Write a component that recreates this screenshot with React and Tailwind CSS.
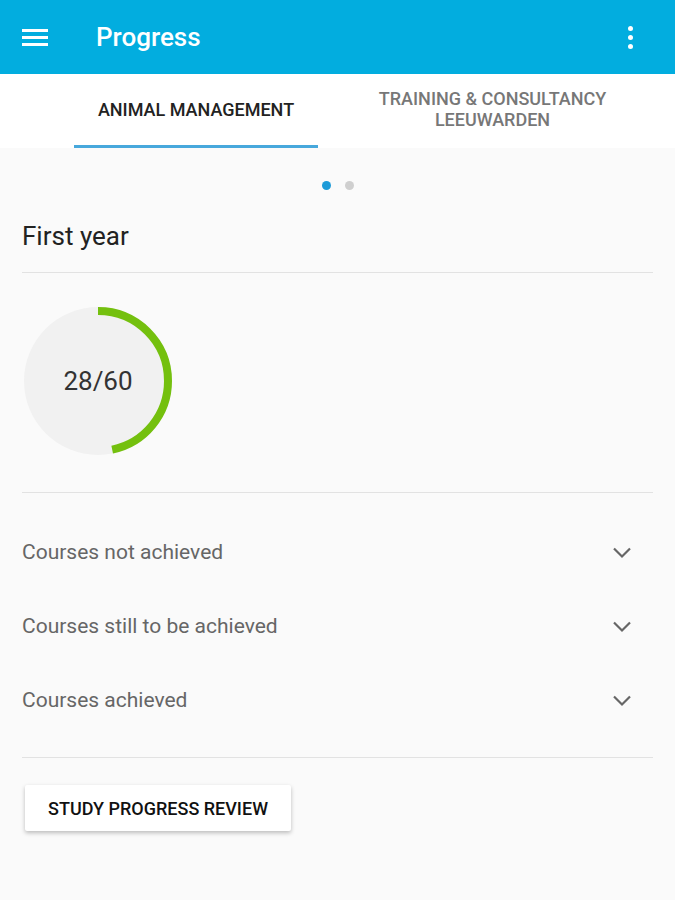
import React from 'react'

const rows = ['Courses not achieved', 'Courses still to be achieved', 'Courses achieved']

const Chevron = () => (
    <svg width="24" height="24" viewBox="0 0 24 24" className="text-[#666]">
        <path d="M4 8.5l8 8 8-8" fill="none" stroke="currentColor" strokeWidth="2.2" />
    </svg>
)

const ProgressRing = ({ value, total }) => {
    const r = 70
    const c = 2 * Math.PI * r
    const frac = value / total
    return (
        <div className="relative w-[150px] h-[150px]">
            <svg width="150" height="150" viewBox="0 0 150 150">
                <circle cx="75" cy="75" r="74" fill="#f1f1f1" />
                <circle
                    cx="75" cy="75" r={r} fill="none" stroke="#74c00e" strokeWidth="8"
                    strokeDasharray={`${c * frac} ${c}`}
                    transform="rotate(-90 75 75)"
                />
            </svg>
            <div className="absolute inset-0 flex items-center justify-center text-[26px] text-[#333]">
                {value}/{total}
            </div>
        </div>
    )
}

export default function App() {
    return (
        <div className="w-[675px] h-[900px] bg-[#fafafa] font-['Roboto',sans-serif] overflow-hidden">
            {/* App bar */}
            <div className="h-[74px] bg-[#02addf] flex items-center px-[22px]">
                <svg width="26" height="20" viewBox="0 0 26 20" className="text-white">
                    <rect x="0" y="2" width="26" height="3" fill="currentColor" />
                    <rect x="0" y="9" width="26" height="3" fill="currentColor" />
                    <rect x="0" y="16" width="26" height="3" fill="currentColor" />
                </svg>
                <h1 className="ml-[48px] text-white text-[26px] font-medium">Progress</h1>
                <div className="ml-auto mr-[20px] flex flex-col gap-[4px]">
                    <span className="w-[5px] h-[5px] rounded-full bg-white" />
                    <span className="w-[5px] h-[5px] rounded-full bg-white" />
                    <span className="w-[5px] h-[5px] rounded-full bg-white" />
                </div>
            </div>

            {/* Tabs */}
            <div className="h-[74px] bg-white flex">
                <div className="w-[392px] shrink-0 flex justify-center">
                    <div className="w-[244px] flex items-center justify-center border-b-[3px] border-[#47a8dc] text-[18px] font-medium text-[#222] whitespace-nowrap">
                        ANIMAL MANAGEMENT
                    </div>
                </div>
                <div className="flex-1 min-w-0 flex items-center justify-center text-center text-[18px] font-medium leading-[21px] text-[#777] pr-[82px] pb-[4px] whitespace-nowrap">
                    <div>TRAINING &amp; CONSULTANCY<br />LEEUWARDEN</div>
                </div>
            </div>

            {/* Page dots */}
            <div className="flex justify-center gap-[14px] pt-[33px]">
                <span className="w-[9px] h-[9px] rounded-full bg-[#1d9bd8]" />
                <span className="w-[9px] h-[9px] rounded-full bg-[#cfcfcf]" />
            </div>

            <div className="px-[22px]">
                <h2 className="pt-[30px] pb-[20px] text-[26px] text-[#222] leading-[32px]">First year</h2>
                <div className="h-px bg-[#e2e2e2]" />

                <div className="pt-[33px] pb-[36px] pl-[1px]">
                    <ProgressRing value={28} total={60} />
                </div>
                <div className="h-px bg-[#e2e2e2]" />

                <div className="pt-[42px]">
                    {rows.map((r) => (
                        <div key={r} className="h-[74px] flex items-start justify-between">
                            <span className="text-[21px] text-[#666] leading-[34px]">{r}</span>
                            <span className="mr-[19px] mt-[5px]"><Chevron /></span>
                        </div>
                    ))}
                </div>
                <div className="h-px bg-[#e2e2e2]" />

                <button className="mt-[27px] ml-[3px] w-[266px] h-[46px] bg-white shadow-[0_2px_4px_rgba(0,0,0,0.25)] rounded-[2px] text-[18px] font-medium text-[#111]">
                    STUDY PROGRESS REVIEW
                </button>
            </div>
        </div>
    )
}
